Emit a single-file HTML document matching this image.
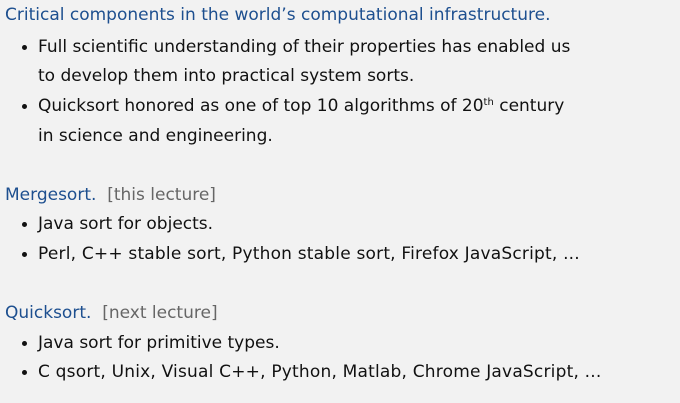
<!DOCTYPE html>
<html><head><style>
body{margin:0;width:680px;height:403px;background:#f2f2f2;font-family:"DejaVu Sans",sans-serif;font-size:17px;color:#111;overflow:hidden}
.l{position:absolute;white-space:nowrap;line-height:20px}
.b{color:#1d4f8f}
.g{color:#666}
.d{position:absolute;width:5px;height:5px;border-radius:50%;background:#111}
sup{font-size:10px;vertical-align:6px;line-height:0}
</style></head><body>
<div class="l b" style="left:5px;top:5px">Critical components in the world’s computational infrastructure.</div>
<div class="d" style="left:22px;top:45px"></div>
<div class="l" style="left:38px;top:37px">Full scientific understanding of their properties has enabled us</div>
<div class="l" style="left:38px;top:66px">to develop them into practical system sorts.</div>
<div class="d" style="left:22px;top:104px"></div>
<div class="l" style="left:38px;top:96px">Quicksort honored as one of top 10 algorithms of 20<sup>th</sup> century</div>
<div class="l" style="left:38px;top:126px">in science and engineering.</div>

<div class="l" style="left:5px;top:185px"><span class="b">Mergesort.</span>&nbsp;&nbsp;<span class="g">[this lecture]</span></div>
<div class="d" style="left:22px;top:222px"></div>
<div class="l" style="left:38px;top:214px">Java sort for objects.</div>
<div class="d" style="left:22px;top:252px"></div>
<div class="l" style="left:38px;top:244px;letter-spacing:0.2px">Perl, C++ stable sort, Python stable sort, Firefox JavaScript, ...</div>

<div class="l" style="left:5px;top:303px"><span class="b">Quicksort.</span>&nbsp;&nbsp;<span class="g">[next lecture]</span></div>
<div class="d" style="left:22px;top:341px"></div>
<div class="l" style="left:38px;top:333px">Java sort for primitive types.</div>
<div class="d" style="left:22px;top:370px"></div>
<div class="l" style="left:38px;top:362px;letter-spacing:0.2px">C qsort, Unix, Visual C++, Python, Matlab, Chrome JavaScript, ...</div>
</body></html>
